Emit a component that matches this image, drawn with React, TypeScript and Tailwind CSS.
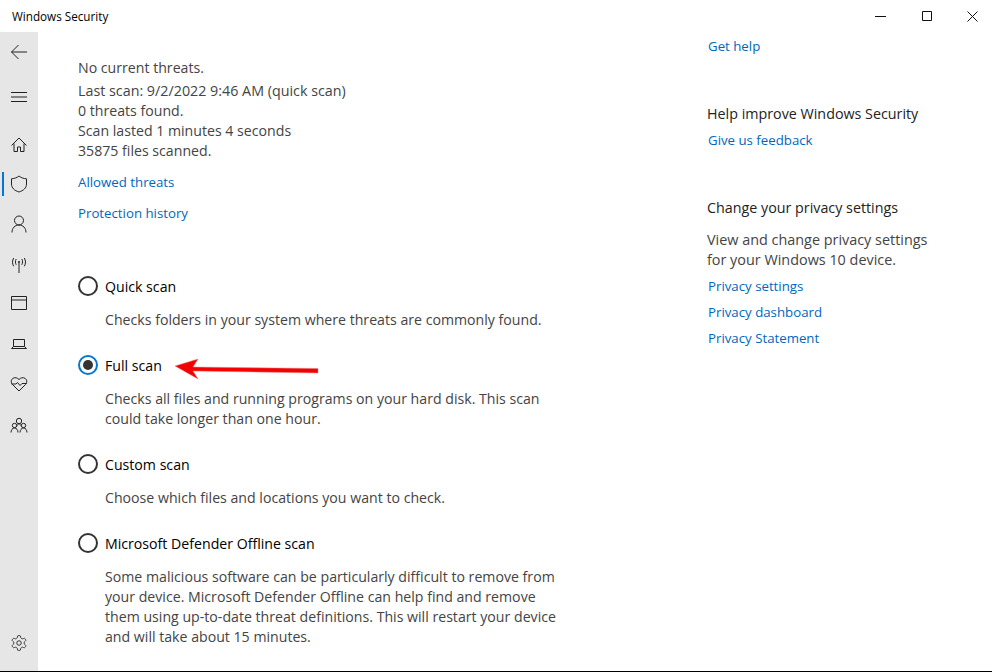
const link = "text-[#0067c0] text-[13.250px]";

function Radio({ checked }: { checked?: boolean }) {
  return checked ? (
    <span className="w-5 h-5 rounded-full border-2 border-[#0078d4] flex items-center justify-center shrink-0">
      <span className="w-[10px] h-[10px] rounded-full bg-[#333333]" />
    </span>
  ) : (
    <span className="w-5 h-5 rounded-full border-2 border-[#333333] shrink-0" />
  );
}

function ScanOption({ label, checked, lines, className }: { label: string; checked?: boolean; lines: string[]; className: string }) {
  return (
    <div className={className}>
      <div className="flex items-center gap-[7px] h-5 text-black">
        <Radio checked={checked} />
        <span className="relative top-px">{label}</span>
      </div>
      <div className="mt-[14px] ml-[27px] text-[#444444] whitespace-nowrap">
        {lines.map((l) => (
          <div key={l} className="h-5 leading-5">{l}</div>
        ))}
      </div>
    </div>
  );
}

function Icon({ children }: { children: React.ReactNode }) {
  return (
    <svg width="18" height="18" viewBox="0 0 18 18" fill="none" stroke="#222" strokeWidth="1">
      {children}
    </svg>
  );
}

const slots: { cls: string; active?: boolean; icon: React.ReactNode }[] = [
  { cls: "", icon: <path d="M17 9H1.500M8.500 2 1.500 9l7 7" /> },
  { cls: "mt-[5px]", icon: <path d="M1 4.500h16M1 9h16M1 13.500h16" /> },
  { cls: "mt-[7px]", icon: <path d="M9 3 1.500 10.500M9 3l7.500 7.500M4 8.500v8h3.500v-4.500h3v4.500H14v-8" /> },
  { cls: "", active: true, icon: <path d="M9 1c2 1.700 4.600 2.600 7.500 2.800V9c0 4-3 6.600-7.500 8C4.500 15.600 1.500 13 1.500 9V3.800C4.400 3.600 7 2.700 9 1Z" /> },
  { cls: "", icon: <><circle cx="9" cy="5.500" r="4.500" /><path d="M2 17.500c0-4.500 3-7.500 7-7.500s7 3 7 7.500" /></> },
  { cls: "", icon: <><path d="M9 8V18" /><circle cx="9" cy="7" r=".7" /><path d="M6.200 4c-1 1.800-1 4 0 5.800M11.800 4c1 1.800 1 4 0 5.800M3.700 3c-1.600 2.600-1.600 5.700 0 8.300M14.300 3c1.600 2.600 1.600 5.700 0 8.300" /></> },
  { cls: "mt-[-1px]", icon: <path d="M1.500 2.500h15v13h-15zM1.500 6h15" /> },
  { cls: "", icon: <path d="M3.500 5.500h11v7h-11zM1.500 14.500h15l-2-2h-11z" /> },
  { cls: "mt-px", icon: <path d="M9 16 2.500 9.500C.5 7.500 1 4.500 3 3.300c2-1.200 4.500-.6 6 1.300 1.500-1.900 4-2.500 6-1.300 2 1.200 2.500 4.200.5 6.200L9 16ZM1.500 9H6l1.500-1.500 2.500 3L12 8.500h4.500" /> },
  { cls: "mt-px", icon: <><circle cx="9" cy="5" r="2.700" /><circle cx="4.500" cy="9.500" r="2.200" /><circle cx="13.500" cy="9.500" r="2.200" /><path d="M1 16.500c0-2.500 1.500-4.500 3.500-4.500S8 14 8 16.500M10 16.500c0-2.500 1.500-4.500 3.500-4.500s3.500 2 3.500 4.500M6.500 10.500c.6-1.500 1.500-2.500 2.500-2.500s1.900 1 2.500 2.500" /></> },
];

export default function App() {
  return (
    <div className="w-[992px] h-[672px] overflow-hidden bg-white flex flex-col relative text-[14.150px] leading-5 font-['Open_Sans','Noto_Sans',sans-serif]">
      <div className="h-8 shrink-0 flex items-center justify-between">
        <span className="ml-3 text-[11.700px] text-black">Windows Security</span>
        <div className="flex items-center text-black mr-[-3px]">
          <div className="w-[46px] h-8 flex items-center justify-center">
            <svg width="11" height="11" viewBox="0 0 11 11"><path d="M0 5.500h11" stroke="#111" /></svg>
          </div>
          <div className="w-[46px] h-8 flex items-center justify-center">
            <svg width="10" height="10" viewBox="0 0 10 10" className="ml-px"><path d="M.5.500h9v9h-9z" fill="none" stroke="#111" /></svg>
          </div>
          <div className="w-[46px] h-8 flex items-center justify-center">
            <svg width="11" height="11" viewBox="0 0 11 11"><path d="m.5.500 10 10M10.500.500l-10 10" stroke="#111" /></svg>
          </div>
        </div>
      </div>
      <div className="flex-1 flex min-h-0">
        <nav className="w-[38px] shrink-0 bg-[#e6e6e6] flex flex-col">
          {slots.map((s, i) => (
            <div key={i} className={`relative h-10 flex items-center justify-center shrink-0 ${s.cls}`}>
              {s.active && <span className="absolute left-[2px] top-2 w-[2px] h-6 bg-[#0078d4]" />}
              <Icon>{s.icon}</Icon>
            </div>
          ))}
          <div className="mt-auto mb-[19px] h-[18px] flex items-center justify-center">
            <svg width="18" height="18" viewBox="0 0 24 24" fill="none" stroke="#333" strokeWidth="1.300">
              <path d="M12.220 2h-.44a2 2 0 0 0-2 2v.18a2 2 0 0 1-1 1.730l-.43.25a2 2 0 0 1-2 0l-.15-.08a2 2 0 0 0-2.730.73l-.22.38a2 2 0 0 0 .73 2.730l.15.10a2 2 0 0 1 1 1.720v.51a2 2 0 0 1-1 1.740l-.15.090a2 2 0 0 0-.73 2.730l.22.38a2 2 0 0 0 2.730.73l.15-.08a2 2 0 0 1 2 0l.43.25a2 2 0 0 1 1 1.730V20a2 2 0 0 0 2 2h.44a2 2 0 0 0 2-2v-.18a2 2 0 0 1 1-1.730l.43-.25a2 2 0 0 1 2 0l.15.08a2 2 0 0 0 2.730-.73l.22-.39a2 2 0 0 0-.73-2.730l-.15-.08a2 2 0 0 1-1-1.740v-.5a2 2 0 0 1 1-1.740l.15-.09a2 2 0 0 0 .73-2.730l-.22-.38a2 2 0 0 0-2.730-.73l-.15.08a2 2 0 0 1-2 0l-.43-.25a2 2 0 0 1-1-1.730V4a2 2 0 0 0-2-2z" />
              <circle cx="12" cy="12" r="3" />
            </svg>
          </div>
        </nav>
        <main className="flex-1 flex min-w-0">
          <section className="w-[669px] shrink-0 pl-10 pt-[26px] text-[#444444] whitespace-nowrap">
            <div>No current threats.</div>
            <div className="mt-[3px] text-[14.300px]">Last scan: 9/2/2022 9:46 AM (quick scan)</div>
            <div>0 threats found.</div>
            <div>Scan lasted 1 minutes 4 seconds</div>
            <div>35875 files scanned.</div>
            <div className={`mt-[11px] ${link}`}>Allowed threats</div>
            <div className={`mt-[11px] ${link}`}>Protection history</div>
            <ScanOption className="mt-[53px]" label="Quick scan" lines={["Checks folders in your system where threats are commonly found."]} />
            <ScanOption className="mt-[25px]" label="Full scan" checked lines={["Checks all files and running programs on your hard disk. This scan", "could take longer than one hour."]} />
            <ScanOption className="mt-[25px]" label="Custom scan" lines={["Choose which files and locations you want to check."]} />
            <ScanOption className="mt-[25px]" label="Microsoft Defender Offline scan" lines={["Some malicious software can be particularly difficult to remove from", "your device. Microsoft Defender Offline can help find and remove", "them using up-to-date threat definitions. This will restart your device", "and will take about 15 minutes."]} />
          </section>
          <aside className="flex-1 pt-[4px] whitespace-nowrap text-[#444444]">
            <div className={`${link} ml-px`}>Get help</div>
            <div className="mt-[48px] text-[#222222] text-[14.300px]">Help improve Windows Security</div>
            <div className={`mt-[6px] ml-px ${link}`}>Give us feedback</div>
            <div className="mt-[48px] text-[#222222] text-[14.300px]">Change your privacy settings</div>
            <div className="mt-[12px] text-[14.400px]">View and change privacy settings</div>
            <div className="text-[14.400px]">for your Windows 10 device.</div>
            <div className={`mt-[6px] ml-px ${link}`}>Privacy settings</div>
            <div className={`mt-[6px] ml-px ${link}`}>Privacy dashboard</div>
            <div className={`mt-[6px] ml-px ${link}`}>Privacy Statement</div>
          </aside>
        </main>
      </div>
      <div className="h-px shrink-0 bg-black" />
      <svg className="absolute left-[170px] top-[352px]" width="154" height="28" viewBox="0 0 154 28">
        <path d="M5 14 28 7l-5 8 125 1.500V21L23 19l5 8Z" fill="#f40000" stroke="#d88" strokeWidth=".5" />
      </svg>
    </div>
  );
}
